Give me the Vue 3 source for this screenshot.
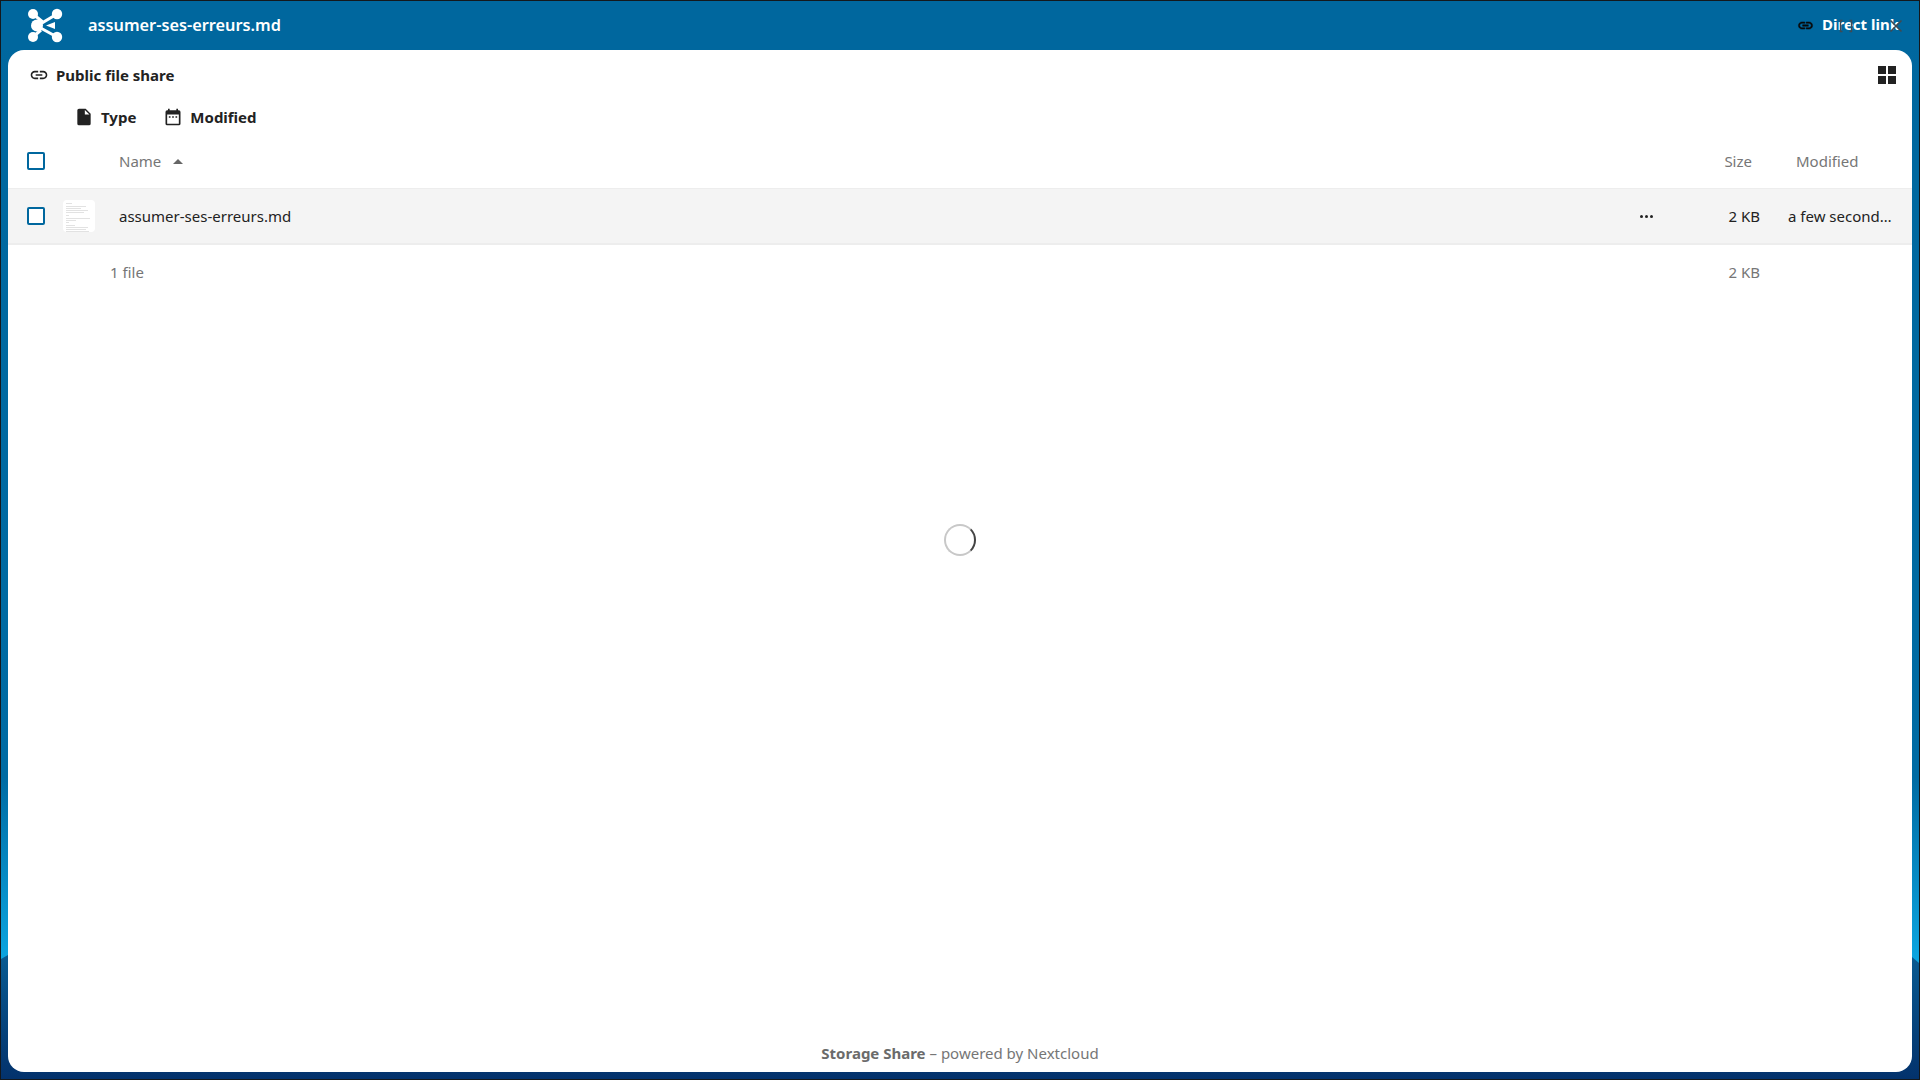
<script setup>
const thumbLines = [
  [3, 3, 6], [3, 6, 20], [3, 8, 15], [3, 10, 22], [3, 12, 18],
  [3, 15, 3], [3, 18, 24], [3, 20, 10], [3, 22, 3],
  [3, 25, 9], [3, 27, 22], [3, 29, 20], [3, 31, 23]
]
</script>

<template>
  <div class="window">
    <header class="topbar">
      <div class="brand">
        <svg class="logo" width="36" height="36" viewBox="0 0 36 36" aria-hidden="true">
          <g fill="none" stroke="#fff" stroke-width="3">
            <path d="M6 6 L17 15 M6 29 L14 22 M30 6 L10 18 L30 29" />
          </g>
          <circle cx="6" cy="6" r="5" fill="#fff" />
          <circle cx="30" cy="6" r="5.2" fill="#fff" />
          <circle cx="6" cy="29" r="5" fill="#fff" />
          <circle cx="30" cy="29" r="5.2" fill="#fff" />
          <circle cx="10" cy="17.5" r="6" fill="#fff" />
          <path d="M19 17.5 L28 14 L28 21 Z" fill="#fff" />
        </svg>
        <span class="filename">assumer-ses-erreurs.md</span>
      </div>
      <div class="actions">
        <svg class="link-icon" width="17" height="17" viewBox="0 0 24 24" aria-hidden="true">
          <path fill="#0a0a0a" stroke="#0a0a0a" stroke-width="0.7" d="M3.9 12c0-1.71 1.39-3.1 3.1-3.1h4V7H7c-2.76 0-5 2.24-5 5s2.24 5 5 5h4v-1.9H7c-1.71 0-3.1-1.39-3.1-3.1zM8 13h8v-2H8v2zm9-6h-4v1.9h4c1.71 0 3.1 1.39 3.1 3.1s-1.39 3.1-3.1 3.1h-4V17h4c2.76 0 5-2.24 5-5s-2.24-5-5-5z" />
        </svg>
        <span class="direct">Direct link</span>
        <span class="overlay-icons" aria-hidden="true">
          <svg width="14" height="14" viewBox="0 0 14 14">
            <path fill="none" stroke="#3f4a54" stroke-width="1.4" d="M3.5 1.5H1.5V12.5H3.5M10.5 1.5H12.5V12.5H10.5" />
          </svg>
          <svg width="14" height="14" viewBox="0 0 14 14">
            <path fill="none" stroke="#3f4a54" stroke-width="1.6" d="M1.5 1.5L12.5 12.5M12.5 1.5L1.5 12.5" />
          </svg>
        </span>
      </div>
    </header>

    <main class="card">
      <div class="card-head">
        <div class="share-title">
          <svg width="20" height="20" viewBox="0 0 24 24" aria-hidden="true">
            <path fill="#222" d="M3.9 12c0-1.71 1.39-3.1 3.1-3.1h4V7H7c-2.76 0-5 2.24-5 5s2.24 5 5 5h4v-1.9H7c-1.71 0-3.1-1.39-3.1-3.1zM8 13h8v-2H8v2zm9-6h-4v1.9h4c1.71 0 3.1 1.39 3.1 3.1s-1.39 3.1-3.1 3.1h-4V17h4c2.76 0 5-2.24 5-5s-2.24-5-5-5z" />
          </svg>
          <span>Public file share</span>
        </div>
        <div class="grid-icon" aria-hidden="true"><i></i><i></i><i></i><i></i></div>
      </div>

      <div class="filters">
        <div class="filter">
          <svg width="20" height="20" viewBox="0 0 24 24" aria-hidden="true">
            <path fill="#222" d="M14 2H6a2 2 0 0 0-2 2v16a2 2 0 0 0 2 2h12a2 2 0 0 0 2-2V8l-6-6zm-1 7V3.5L18.5 9H13z" />
          </svg>
          <span>Type</span>
        </div>
        <div class="filter">
          <svg width="20" height="20" viewBox="0 0 24 24" aria-hidden="true">
            <path fill="#222" d="M19 4h-1V2h-2v2H8V2H6v2H5a2 2 0 0 0-2 2v14a2 2 0 0 0 2 2h14a2 2 0 0 0 2-2V6a2 2 0 0 0-2-2zm0 16H5V9h14v11zM7 11h2v2H7v-2zm4 0h2v2h-2v-2zm4 0h2v2h-2v-2z" />
          </svg>
          <span>Modified</span>
        </div>
      </div>

      <div class="row head-row">
        <div class="cell-check"><span class="check"></span></div>
        <div class="cell-thumb"></div>
        <div class="cell-name">Name <span class="sort"></span></div>
        <div class="cell-size head-size">Size</div>
        <div class="cell-mod head-mod">Modified</div>
      </div>

      <div class="row file-row">
        <div class="cell-check"><span class="check"></span></div>
        <div class="cell-thumb">
          <div class="thumb">
            <i
              v-for="(l, idx) in thumbLines"
              :key="idx"
              :style="{ left: l[0] + 'px', top: l[1] + 'px', width: l[2] + 'px' }"
            ></i>
          </div>
        </div>
        <div class="cell-name file-name">assumer-ses-erreurs.md</div>
        <div class="more" aria-hidden="true"><i></i><i></i><i></i></div>
        <div class="cell-size">2 KB</div>
        <div class="cell-mod">a few second…</div>
      </div>

      <div class="row summary-row">
        <div class="summary-count">1 file</div>
        <div class="cell-size">2 KB</div>
        <div class="cell-mod"></div>
      </div>

      <div class="spinner-area"><div class="spinner"></div></div>

      <footer class="foot"><b>Storage Share</b> – powered by Nextcloud</footer>
    </main>
  </div>
</template>

<style>
html, body { margin: 0; padding: 0; background: #0d1014; }
</style>

<style scoped>
.window {
  box-sizing: border-box;
  width: 1920px;
  height: 1080px;
  border: 1px solid #14181c;
  display: flex;
  flex-direction: column;
  overflow: hidden;
  font-family: "Noto Sans", "Open Sans", sans-serif;
  background: linear-gradient(180deg, #00679e 0%, #006ba3 72%, #0ca5e0 89%);
  position: relative;
}
.window::after {
  content: "";
  position: absolute;
  left: 0;
  right: 0;
  bottom: 0;
  height: 140px;
  background: linear-gradient(180deg, #0a6096 0%, #03326c 100%);
  clip-path: polygon(0 20px, 7px 16px, 50% 0, 1911px 18px, 100% 24px, 100% 100%, 0 100%);
}
.topbar {
  height: 49px;
  flex: none;
  background: #00679e;
  display: flex;
  align-items: center;
  justify-content: space-between;
  position: relative;
  z-index: 1;
}
.brand { display: flex; align-items: center; }
.logo { margin-left: 26px; }
.filename {
  margin-left: 25px;
  margin-bottom: 2px;
  color: #fff;
  font-size: 16.3px;
  font-weight: 600;
}
.actions {
  position: relative;
  display: flex;
  align-items: center;
  padding-right: 20px;
}
.link-icon { margin-right: 8px; }
.direct {
  color: #fff;
  font-size: 15px;
  font-weight: 700;
  margin-bottom: 4px;
}
.overlay-icons {
  position: absolute;
  right: 16px;
  top: 50%;
  margin-top: -7px;
  display: flex;
  gap: 36px;
}
.card {
  position: relative;
  z-index: 1;
  flex: 1;
  margin: 0 7px 7px;
  background: #fff;
  border-radius: 16px;
  display: flex;
  flex-direction: column;
  color: #222;
  min-height: 0;
}
.card-head {
  display: flex;
  align-items: center;
  justify-content: space-between;
  height: 50px;
  padding: 0 16px 0 21px;
}
.share-title {
  display: flex;
  align-items: center;
  gap: 7px;
  font-size: 15px;
  font-weight: 700;
  color: #222;
}
.grid-icon {
  display: grid;
  grid-template-columns: 8px 8px;
  grid-template-rows: 8px 8px;
  gap: 2px;
}
.grid-icon i { background: #222; display: block; }
.filters {
  display: flex;
  align-items: center;
  height: 34px;
  padding-left: 66px;
  gap: 27px;
}
.filter {
  display: flex;
  align-items: center;
  gap: 7px;
  font-size: 15px;
  font-weight: 700;
  color: #222;
}
.row {
  display: flex;
  align-items: center;
  font-size: 15px;
  padding-right: 20px;
}
.head-row {
  height: 55px;
  color: #767676;
  border-bottom: 1px solid #ededed;
  box-sizing: border-box;
}
.cell-check {
  width: 55px;
  padding-left: 19px;
  box-sizing: border-box;
  flex: none;
  display: flex;
}
.check {
  width: 18px;
  height: 18px;
  box-sizing: border-box;
  border: 2px solid #00679e;
  border-radius: 2px;
  background: #fff;
  display: block;
}
.cell-thumb { width: 56px; flex: none; }
.thumb {
  position: relative;
  width: 32px;
  height: 32px;
  background: #fff;
  border-radius: 4px;
}
.thumb i {
  position: absolute;
  height: 1px;
  background: #e2e2e2;
  display: block;
}
.cell-name { flex: 1; display: flex; align-items: center; }
.sort {
  display: inline-block;
  margin-left: 12px;
  width: 0;
  height: 0;
  border-left: 5px solid transparent;
  border-right: 5px solid transparent;
  border-bottom: 5px solid #666;
}
.cell-size {
  width: 80px;
  flex: none;
  text-align: right;
  box-sizing: border-box;
}
.cell-mod {
  width: 132px;
  flex: none;
  box-sizing: border-box;
  padding-left: 28px;
  white-space: nowrap;
}
.head-size { padding-right: 8px; }
.head-mod { padding-left: 36px; }
.file-row {
  height: 56px;
  background: #f4f4f4;
  border-bottom: 2px solid #ededed;
  box-sizing: border-box;
}
.file-name { color: #222; }
.more {
  display: flex;
  gap: 2px;
  margin-right: 27px;
}
.more i {
  width: 3px;
  height: 3px;
  border-radius: 50%;
  background: #222;
  display: block;
}
.summary-row {
  height: 54px;
  color: #767676;
}
.summary-count {
  flex: 1;
  padding-left: 102px;
}
.spinner-area {
  flex: 1;
  display: flex;
  justify-content: center;
  padding-top: 225px;
  min-height: 0;
}
.spinner {
  width: 32px;
  height: 32px;
  box-sizing: border-box;
  border-radius: 50%;
  border: 2px solid #c8c8c8;
  border-right-color: #444;
}
.foot {
  height: 38px;
  flex: none;
  text-align: center;
  font-size: 15px;
  color: #767676;
  line-height: 38px;
}
.foot b { font-weight: 700; color: #6b6b6b; }
</style>
